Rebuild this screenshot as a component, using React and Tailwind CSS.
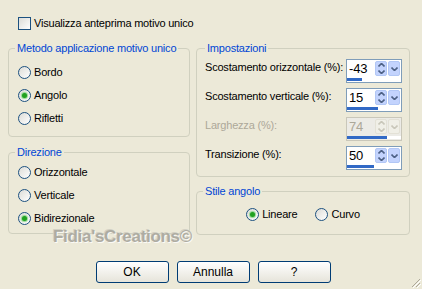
import React from "react";

const FONT = { fontFamily: '"Liberation Sans", Arial, sans-serif' };

// controlli in stile Windows XP
function Radio({ checked, label, className = "" }) {
  return (
    <label className={`flex items-center ${className}`}>
      <span className="w-[13px] h-[13px] rounded-full border border-[#1C5180] bg-gradient-to-br from-[#dcdcd7] to-white flex items-center justify-center">
        {checked && (
          <span className="w-[5px] h-[5px] rounded-full bg-[#21a121] shadow-[0_0_1px_1px_#8fd88f]" />
        )}
      </span>
      <span className="ml-[3px] text-black">{label}</span>
    </label>
  );
}

function Group({ title, className = "", children }) {
  return (
    <fieldset
      className={`border border-[#d0d0bf] rounded-[4px] pl-[6px] pr-[6px] ${className}`}
    >
      <legend className="px-[2px] leading-[14px] whitespace-nowrap text-[#0046d5]">
        {title}
      </legend>
      {children}
    </fieldset>
  );
}

function Chevron({ up, color }) {
  return (
    <svg width="7" height="4" viewBox="0 0 7 4">
      <path
        d={up ? "M0.5 3.5 L3.5 0.5 L6.5 3.5" : "M0.5 0.5 L3.5 3.5 L6.5 0.5"}
        fill="none"
        stroke={color}
        strokeWidth="1.6"
      />
    </svg>
  );
}

function Spin({ value, bar, disabled }) {
  const arrow = disabled ? "#c9c7ba" : "#4d6185";
  const btn = disabled
    ? "bg-[#f0efe7] border-[#e3e1d6]"
    : "bg-[#c3d3fd] border-[#b2c7f5]";
  return (
    <div
      className={`w-[56px] h-[24px] border flex flex-col ${
        disabled ? "border-[#c9c7ba] bg-[#ecebe6]" : "border-[#7f9db9] bg-white"
      }`}
    >
      <div className="flex h-[17px]">
        <span
          className={`flex-1 pl-[2px] text-[13px] leading-[17px] ${
            disabled ? "text-[#aca899]" : "text-black"
          }`}
        >
          {value}
        </span>
        <span
          className={`mt-[1px] w-[12px] h-[15px] border rounded-[2px] flex flex-col items-center justify-center gap-[3px] ${btn}`}
        >
          <Chevron up color={arrow} />
          <Chevron color={arrow} />
        </span>
        <span
          className={`mt-[1px] ml-[1px] mr-[1px] w-[12px] h-[15px] border rounded-[2px] flex items-center justify-center ${btn}`}
        >
          <Chevron color={arrow} />
        </span>
      </div>
      <div className="mt-[1px] h-[3px] bg-white">
        <div className="h-full bg-[#3169c6]" style={{ width: bar }} />
      </div>
    </div>
  );
}

function Row({ label, value, bar, disabled }) {
  return (
    <div className="flex items-start justify-between h-[24px]">
      <span
        className={`mt-[1px] leading-[14px] whitespace-nowrap ${
          disabled ? "text-[#aca899]" : "text-black"
        }`}
      >
        {label}
      </span>
      <Spin value={value} bar={bar} disabled={disabled} />
    </div>
  );
}

function XpButton({ children }) {
  return (
    <button className="w-[73px] h-[22px] rounded-[3px] border border-[#003c74] bg-gradient-to-b from-white to-[#e6e4da] text-black text-[12px] tracking-normal leading-[20px]">
      {children}
    </button>
  );
}

export default function App() {
  return (
    <div
      className="relative w-[422px] h-[289px] bg-[#ece9d8] text-[11px] tracking-[-0.2px] text-black"
      style={FONT}
    >
      <div className="pt-[16px] pl-[18px] flex items-center h-[31px]">
        <span className="w-[13px] h-[13px] border border-[#1C5180] bg-gradient-to-br from-[#dcdcd7] to-white" />
        <span className="ml-[3px]">Visualizza anteprima motivo unico</span>
      </div>

      <div className="flex pl-[8px] pt-[10px] gap-[6px]">
        <div className="w-[182px] flex flex-col gap-[8px]">
          <Group title="Metodo applicazione motivo unico" className="h-[96px]">
            <div className="pt-[6px] pl-[3px]">
              <Radio label="Bordo" className="h-[23px]" />
              <Radio label="Angolo" checked className="h-[23px]" />
              <Radio label="Rifletti" className="h-[23px]" />
            </div>
          </Group>
          <Group title="Direzione" className="h-[89px]">
            <div className="pt-[2px] pl-[3px]">
              <Radio label="Orizzontale" className="h-[23px]" />
              <Radio label="Verticale" className="h-[23px]" />
              <Radio label="Bidirezionale" checked className="h-[23px]" />
            </div>
          </Group>
        </div>

        <div className="w-[214px] flex flex-col gap-[7px]">
          <Group title="Impostazioni" className="h-[136px] pl-[8px] pr-[7px]">
            <div className="pt-[4px] flex flex-col gap-[5px]">
              <Row label="Scostamento orizzontale (%):" value="-43" bar="15px" />
              <Row label="Scostamento verticale (%):" value="15" bar="31px" />
              <Row label="Larghezza (%):" value="74" bar="40px" disabled />
              <Row label="Transizione (%):" value="50" bar="27px" />
            </div>
          </Group>
          <Group title="Stile angolo" className="h-[51px]">
            <div className="flex justify-center gap-[18px] pt-[8px]">
              <Radio label="Lineare" checked />
              <Radio label="Curvo" />
            </div>
          </Group>
        </div>
      </div>

      <div className="flex justify-center gap-[8px] mt-[26px] pl-[4px]">
        <XpButton>OK</XpButton>
        <XpButton>Annulla</XpButton>
        <XpButton>?</XpButton>
      </div>

      {/* filigrana sovrapposta */}
      <span
        className="absolute left-[53px] top-[224px] text-[17px] font-bold tracking-[-0.3px] text-[#aeaca2]"
        style={{ textShadow: "1px 1px 0 #fbfaf6, -1px -1px 0 #d2d0c4" }}
      >
        Fidia'sCreations©
      </span>

      <svg
        className="absolute right-[1px] bottom-[1px]"
        width="11"
        height="11"
        viewBox="0 0 11 11"
      >
        <path d="M10 2 L2 10 M10 6 L6 10" stroke="#aca899" strokeWidth="1" />
        <path d="M11 3 L3 11 M11 7 L7 11" stroke="#fff" strokeWidth="1" />
      </svg>
    </div>
  );
}
